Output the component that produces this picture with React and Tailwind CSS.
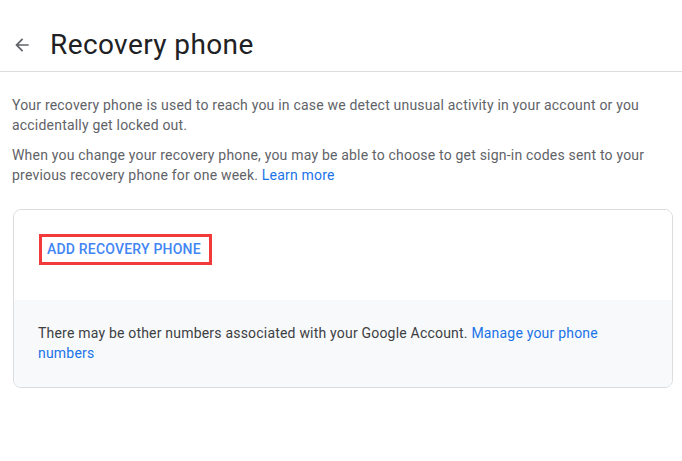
export default function App() {
  return (
    <div className="w-[682px] h-[461px] bg-white font-['Roboto',sans-serif] overflow-hidden">
      <div className="h-[72px] pt-[18px] flex items-center border-b border-[#dadce0]">
        <button className="ml-[12px] w-[20px] h-[20px] flex items-center justify-center text-[#5f6368]">
          <svg width="20" height="20" viewBox="0 0 24 24" fill="currentColor">
            <path d="M20 11H7.83l5.59-5.59L12 4l-8 8 8 8 1.41-1.41L7.83 13H20v-2z" />
          </svg>
        </button>
        <h1 className="ml-[18px] text-[28px] leading-[36px] tracking-[0.4px] text-[#202124] font-normal">Recovery phone</h1>
      </div>
      <div className="pl-[12px] pr-[12px] pt-[23px] text-[14px] leading-[20px] tracking-[0.2px] text-[#5f6368]">
        <p>Your recovery phone is used to reach you in case we detect unusual activity in your account or you accidentally get locked out.</p>
        <p className="mt-[10px]">
          When you change your recovery phone, you may be able to choose to get sign-in codes sent to your previous recovery phone for one week.{" "}
          <a className="text-[#1a73e8]">Learn more</a>
        </p>
      </div>
      <div className="ml-[13px] mr-[9px] mt-[24px] border border-[#dadce0] rounded-[8px] overflow-hidden">
        <div className="h-[90px] pl-[25px] pt-[24px] bg-white">
          <div className="inline-flex items-center h-[31px] pl-[5px] pr-[8px] border-[3px] border-[#f23a3a]">
            <span className="text-[14px] font-medium tracking-[0.2px] text-[#4285f4] uppercase">Add recovery phone</span>
          </div>
        </div>
        <div className="bg-[#f8f9fa] pl-[24px] pr-[24px] pt-[23px] pb-[24px] text-[14px] leading-[20px] tracking-[0.2px] text-[#3c4043]">
          There may be other numbers associated with your Google Account.{" "}
          <a className="text-[#1a73e8]">Manage your phone numbers</a>
        </div>
      </div>
    </div>
  );
}
